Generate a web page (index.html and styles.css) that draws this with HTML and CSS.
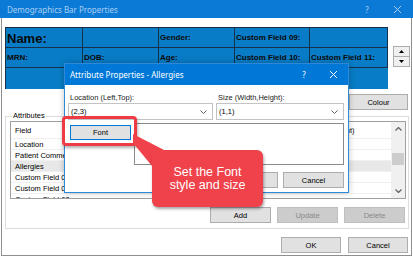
FILE: index.html
```html
<!DOCTYPE html>
<html lang="en">
<head>
    <meta charset="utf-8">
    <title>Demographics Bar Properties</title>
    <link rel="stylesheet" href="styles.css">
</head>
<body>
    <!-- Main window -->
    <div class="window">
        <div class="titlebar">
            <span class="title">Demographics Bar Properties</span>
            <span class="help">?</span>
            <svg class="close" width="7" height="7" viewBox="0 0 7 7"><path d="M0 0L7 7M7 0L0 7"/></svg>
        </div>
        <div class="client">
            <div class="bar-row">
                <div class="demo-bar">
                    <div class="cell name">Name:</div>
                    <div class="cell"></div>
                    <div class="cell">Gender:</div>
                    <div class="cell">Custom Field 09:</div>
                    <div class="cell"></div>
                    <div class="cell">MRN:</div>
                    <div class="cell">DOB:</div>
                    <div class="cell">Age:</div>
                    <div class="cell">Custom Field 10:</div>
                    <div class="cell">Custom Field 11:</div>
                    <div class="cell blank"></div>
                </div>
                <div class="spinner">
                    <div class="spin-btn"><svg width="5" height="3" viewBox="0 0 5 3"><path d="M0 3L2.5 0L5 3Z"/></svg></div>
                    <div class="spin-btn"><svg width="5" height="3" viewBox="0 0 5 3"><path d="M0 0L2.5 3L5 0Z"/></svg></div>
                </div>
            </div>
            <div class="tools">
                <div class="btn colour">Colour</div>
            </div>
            <fieldset class="group">
                <legend>Attributes</legend>
                <div class="list">
                    <div class="list-body">
                        <div class="list-head"><span class="col-field">Field</span><span class="col-size">Size (Width,Height)</span></div>
                        <div class="list-row"><span class="col-field">Location</span></div>
                        <div class="list-row"><span class="col-field">Patient Comments</span></div>
                        <div class="list-row selected"><span class="col-field">Allergies</span></div>
                        <div class="list-row"><span class="col-field">Custom Field 01</span></div>
                        <div class="list-row"><span class="col-field">Custom Field 02</span></div>
                        <div class="list-row"><span class="col-field">Custom Field 03</span></div>
                    </div>
                    <div class="vscroll">
                        <div class="arrow"><svg width="7" height="4" viewBox="0 0 7 4"><path d="M0.5 3.5L3.5 0.5L6.5 3.5"/></svg></div>
                        <div class="track"><div class="thumb"></div></div>
                        <div class="arrow"><svg width="7" height="4" viewBox="0 0 7 4"><path d="M0.5 0.5L3.5 3.5L6.5 0.5"/></svg></div>
                    </div>
                </div>
                <div class="actions">
                    <div class="btn">Add</div>
                    <div class="btn disabled">Update</div>
                    <div class="btn disabled">Delete</div>
                </div>
            </fieldset>
            <div class="footer">
                <div class="btn">OK</div>
                <div class="btn">Cancel</div>
            </div>
        </div>
    </div>

    <!-- Attribute dialog over the main window -->
    <div class="dialog">
        <div class="dlg-title">
            <span class="title">Attribute Properties - Allergies</span>
            <span class="help">?</span>
            <svg class="close" width="7" height="7" viewBox="0 0 7 7"><path d="M0 0L7 7M7 0L0 7"/></svg>
        </div>
        <div class="dlg-body">
            <div class="fields">
                <div class="field">
                    <div class="label">Location (Left,Top):</div>
                    <div class="combo"><span>(2,3)</span><svg width="7" height="4" viewBox="0 0 7 4"><path d="M0.5 0.5L3.5 3.5L6.5 0.5"/></svg></div>
                </div>
                <div class="field">
                    <div class="label">Size (Width,Height):</div>
                    <div class="combo"><span>(1,1)</span><svg width="7" height="4" viewBox="0 0 7 4"><path d="M0.5 0.5L3.5 3.5L6.5 0.5"/></svg></div>
                </div>
            </div>
            <div class="font-row">
                <div class="btn focus">Font</div>
                <div class="preview"></div>
            </div>
            <div class="dlg-buttons">
                <div class="btn">OK</div>
                <div class="btn">Cancel</div>
            </div>
        </div>
    </div>

    <!-- Annotation -->
    <div class="highlight"></div>
    <svg class="pointer" width="40" height="40" viewBox="0 0 40 40"><polygon points="3,4 36,21 22,36 3,13"/></svg>
    <div class="callout">Set the Font<br>style and size</div>
</body>
</html>
```

FILE: styles.css
```css
body {
    margin: 0;
    width: 413px;
    height: 257px;
    overflow: hidden;
    position: relative;
    background: #fff;
    font-family: "Liberation Sans", Arial, sans-serif;
    font-size: 7.5px;
    color: #000;
}
.window {
    width: 413px;
}
.titlebar {
    height: 18px;
    background: #0b7ad6;
    display: flex;
    align-items: center;
    padding-left: 7px;
    color: #a9cff3;
    font-family: "Noto Sans", "Liberation Sans", sans-serif;
    font-size: 8px;
}
.titlebar .title {
    flex: 1;
}
.titlebar .help {
    width: 6px;
    text-align: center;
    margin-right: 24px;
}
.titlebar .close {
    margin-right: 12px;
    stroke: #a9cff3;
    stroke-width: 1;
}
.client {
    margin-left: 1px;
    width: 409px;
    border: 1px solid #8f8f8f;
    border-top: none;
    padding: 9px 0 2px 0;
}
.bar-row {
    display: flex;
    padding-left: 3px;
}
.demo-bar {
    width: 382px;
    height: 61px;
    border-top: 1px solid #16304a;
    border-left: 1px solid #16304a;
    background: #087cc6;
    display: grid;
    grid-template-columns: 77px 76px 76px 75px 78px;
    grid-template-rows: 20px 20px 21px;
}
.cell {
    border-right: 1px solid #16304a;
    border-bottom: 1px solid #16304a;
    box-sizing: border-box;
    display: flex;
    align-items: center;
    padding-left: 1px;
    font-weight: bold;
    font-size: 8px;
    color: #0a0a0a;
}
.cell.name {
    font-size: 13px;
    padding-top: 1px;
}
.cell.blank {
    grid-column: 1 / 6;
    border: none;
}
.spinner {
    margin: 19px 0 0 5px;
    display: flex;
    flex-direction: column;
}
.spin-btn {
    width: 15px;
    height: 9px;
    border: 1px solid #adadad;
    background: #f0f0f0;
    display: flex;
    align-items: center;
    justify-content: center;
}
.spin-btn + .spin-btn {
    border-top: none;
}
.tools {
    display: flex;
    justify-content: flex-end;
    margin: 5px 3px 0 0;
}
.btn {
    box-sizing: border-box;
    width: 61px;
    height: 16px;
    border: 1px solid #adadad;
    background: #e1e1e1;
    display: flex;
    align-items: center;
    justify-content: center;
}
.btn.colour {
    width: 59px;
}
.btn.disabled {
    background: #cccccc;
    border-color: #bfbfbf;
    color: #8a8a8a;
}
.btn.focus {
    border-color: #0078d7;
}
.group {
    margin: 1px 2px 0 3px;
    padding: 0 2px 5px 4px;
    border: 1px solid #dcdcdc;
}
.group legend {
    padding: 0 1px;
    margin-left: 2px;
    line-height: 10px;
}
.list {
    height: 78px;
    box-sizing: border-box;
    border: 1px solid #a0a0a0;
    display: flex;
    overflow: hidden;
}
.list-body {
    flex: 1;
}
.list-head {
    height: 17px;
    display: flex;
    align-items: center;
    border-bottom: 1px solid #f0f0f0;
    box-sizing: border-box;
}
.list-row {
    height: 11px;
    box-sizing: border-box;
    border-bottom: 1px solid #f0f0f0;
    display: flex;
    align-items: center;
    white-space: nowrap;
}
.list-row.selected {
    background: #e8e8e8;
}
.col-field {
    width: 49px;
    padding-left: 4px;
    white-space: nowrap;
}
.col-size {
    margin-left: 226px;
    white-space: nowrap;
}
.vscroll {
    width: 14px;
    background: #f0f0f0;
    display: flex;
    flex-direction: column;
}
.vscroll .arrow {
    height: 14px;
    display: flex;
    align-items: center;
    justify-content: center;
}
.vscroll svg {
    fill: none;
    stroke: #606060;
    stroke-width: 1.2;
}
.vscroll .track {
    flex: 1;
    padding-top: 17px;
}
.vscroll .thumb {
    margin: 0 1px;
    height: 12px;
    background: #cdcdcd;
}
.actions {
    display: flex;
    justify-content: flex-end;
    gap: 6px;
    margin: 8px 1px 0 0;
}
.footer {
    display: flex;
    justify-content: flex-end;
    gap: 7px;
    margin: 8px 3px 0 0;
}
.footer .btn {
    width: 60px;
}

/* Attribute Properties dialog */
.dialog {
    position: absolute;
    left: 64px;
    top: 63px;
    width: 283px;
    height: 128px;
    border: 1px solid #2f88d8;
    background: #fff;
    box-shadow: 0 0 6px rgba(0,0,0,0.25);
}
.dlg-title {
    height: 21px;
    background: #0078d7;
    display: flex;
    align-items: center;
    padding-left: 5px;
    color: #fff;
    font-family: "Noto Sans", "Liberation Sans", sans-serif;
    font-size: 8px;
}
.dlg-title .title {
    flex: 1;
}
.dlg-title .help {
    width: 6px;
    text-align: center;
    margin-right: 23px;
}
.dlg-title .close {
    margin-right: 11px;
    stroke: #fff;
    stroke-width: 1;
}
.dlg-body {
    padding: 8px 4px 0 3px;
}
.fields {
    display: grid;
    grid-template-columns: 145px 128px;
    gap: 3px;
}
.label {
    padding-left: 2px;
    line-height: 9px;
    margin-bottom: 1px;
    color: #222;
}
.combo {
    height: 17px;
    box-sizing: border-box;
    border: 1px solid #c3c3c3;
    display: flex;
    align-items: center;
    justify-content: space-between;
    padding: 0 5px 0 2px;
}
.combo svg {
    fill: none;
    stroke: #606060;
}
.font-row {
    display: flex;
    margin-top: 3px;
}
.font-row .btn {
    margin: 2px 0 0 2px;
    height: 15px;
}
.preview {
    margin-left: 3px;
    flex: 1;
    height: 42px;
    box-sizing: border-box;
    border: 1px solid #8a8a8a;
}
.dlg-buttons {
    display: flex;
    justify-content: flex-end;
    gap: 5px;
    margin-top: 7px;
}

/* Callout annotation */
.highlight {
    position: absolute;
    left: 62px;
    top: 116px;
    width: 69px;
    height: 24px;
    border: 3px solid #ef3b44;
    border-radius: 4px;
    box-shadow: 1px 2px 3px rgba(0,0,0,0.3);
}
.pointer {
    position: absolute;
    left: 130px;
    top: 130px;
    fill: #f0424a;
}
.callout {
    position: absolute;
    left: 152px;
    top: 150px;
    width: 111px;
    height: 57px;
    background: #f0424a;
    border-radius: 6px;
    box-shadow: 1px 2px 3px rgba(0,0,0,0.35);
    color: #fff;
    font-size: 12.5px;
    line-height: 13px;
    display: flex;
    align-items: center;
    justify-content: center;
    text-align: center;
}
```
